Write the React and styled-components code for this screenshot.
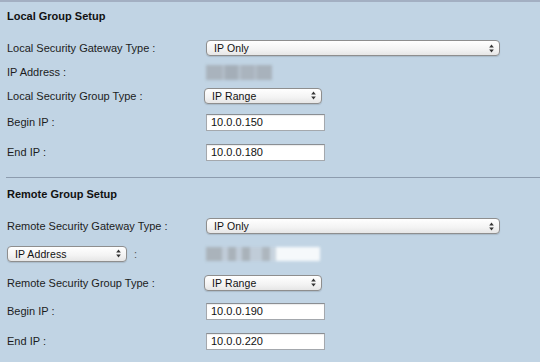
import React from "react";
import styled, { createGlobalStyle } from "styled-components";

const GlobalStyle = createGlobalStyle`
  html, body {
    margin: 0;
    padding: 0;
    background: #c1d4e4;
  }
  body {
    font-family: "Liberation Sans", Arial, Helvetica, sans-serif;
    font-size: 11px;
    color: #1c1c1c;
  }
`;

const Page = styled.div`
  width: 540px;
  height: 362px;
  overflow: hidden;
  background: #c1d4e4;
  border-top: 2px solid #a3afc2;
  box-sizing: border-box;
`;

const Section = styled.div`
  padding: 0 0 ${(p) => p.bottom || 0}px 7px;
`;

const Divider = styled.div`
  height: 1px;
  margin-left: 6px;
  background: #8d9cae;
`;

const Heading = styled.div`
  height: ${(p) => p.h || 34}px;
  padding-top: ${(p) => p.top || 7}px;
  box-sizing: border-box;
  font-weight: bold;
  font-size: 11px;
  line-height: 14px;
  color: #111;
`;

const Row = styled.div`
  display: flex;
  align-items: center;
  height: ${(p) => p.h}px;
`;

const Label = styled.div`
  width: 199px;
  flex-shrink: 0;
  line-height: 14px;
`;

const LabelCell = styled.div`
  width: 199px;
  flex-shrink: 0;
  display: flex;
  align-items: center;
  gap: 7px;
`;

const Select = styled.div`
  display: flex;
  align-items: center;
  justify-content: space-between;
  box-sizing: border-box;
  width: ${(p) => p.w}px;
  height: 16px;
  margin-left: ${(p) => p.shift || 0}px;
  padding: 0 5px 0 7px;
  border: 1px solid #8e8e8e;
  border-radius: 4px;
  background: linear-gradient(#ffffff, #f3f3f3 60%, #e6e6e6);
  box-shadow: 0 1px 1px rgba(0, 0, 0, 0.12);
  font-size: 10.5px;
  color: #111;
  letter-spacing: 0.1px;
`;

const Arrows = () => (
  <svg width="5" height="9" viewBox="0 0 5 9">
    <path d="M2.5 0.5 L4.8 3.6 L0.2 3.6 Z" fill="#333" />
    <path d="M2.5 8.5 L4.8 5.4 L0.2 5.4 Z" fill="#333" />
  </svg>
);

const Input = styled.div`
  box-sizing: border-box;
  width: 119px;
  height: 17px;
  padding: 0 4px;
  border: 1px solid #a4a8ad;
  border-top-color: #8a8e93;
  background: #ffffff;
  box-shadow: inset 0 1px 1px rgba(0, 0, 0, 0.08);
  font-size: 11px;
  line-height: 15px;
  color: #111;
`;

const Colon = styled.span`
  color: #555;
`;

const Blur = styled.div`
  display: flex;
  align-items: stretch;
  height: ${(p) => p.h}px;
  filter: blur(1.4px);
`;

const Block = styled.div`
  width: ${(p) => p.w}px;
  background: ${(p) => p.c};
`;

const LocalAddress = () => (
  <Blur h={15}>
    <Block w={16} c="#a9b3bd" />
    <Block w={3} c="#b3bec9" />
    <Block w={13} c="#a4aeb8" />
    <Block w={3} c="#b5c0cb" />
    <Block w={13} c="#aab4be" />
    <Block w={3} c="#b2bdc8" />
    <Block w={15} c="#a8b2bc" />
  </Blur>
);

const RemoteAddress = () => (
  <Blur h={14}>
    <Block w={16} c="#aab3bb" />
    <Block w={6} c="#c0ccd8" />
    <Block w={8} c="#a9b2ba" />
    <Block w={6} c="#c0ccd8" />
    <Block w={8} c="#a9b2ba" />
    <Block w={12} c="#c0ccd8" />
    <Block w={8} c="#adb6be" />
    <Block w={6} c="#c8d4df" />
    <Block w={44} c="#f6f9fb" />
  </Blur>
);

const App = () => (
  <Page>
    <GlobalStyle />
    <Section bottom={10}>
      <Heading>Local Group Setup</Heading>
      <Row h={24}>
        <Label>Local Security Gateway Type :</Label>
        <Select w={294}>
          IP Only
          <Arrows />
        </Select>
      </Row>
      <Row h={24}>
        <Label>IP Address :</Label>
        <LocalAddress />
      </Row>
      <Row h={23}>
        <Label>Local Security Group Type :</Label>
        <Select w={118} shift={-2}>
          IP Range
          <Arrows />
        </Select>
      </Row>
      <Row h={30}>
        <Label>Begin IP :</Label>
        <Input>10.0.0.150</Input>
      </Row>
      <Row h={30}>
        <Label>End IP :</Label>
        <Input>10.0.0.180</Input>
      </Row>
    </Section>
    <Divider />
    <Section>
      <Heading top={9} h={36}>Remote Group Setup</Heading>
      <Row h={24}>
        <Label>Remote Security Gateway Type :</Label>
        <Select w={294}>
          IP Only
          <Arrows />
        </Select>
      </Row>
      <Row h={31}>
        <LabelCell>
          <Select w={120}>
            IP Address
            <Arrows />
          </Select>
          <Colon>:</Colon>
        </LabelCell>
        <RemoteAddress />
      </Row>
      <Row h={27}>
        <Label>Remote Security Group Type :</Label>
        <Select w={118} shift={-2}>
          IP Range
          <Arrows />
        </Select>
      </Row>
      <Row h={30}>
        <Label>Begin IP :</Label>
        <Input>10.0.0.190</Input>
      </Row>
      <Row h={30}>
        <Label>End IP :</Label>
        <Input>10.0.0.220</Input>
      </Row>
    </Section>
  </Page>
);

export default App;
